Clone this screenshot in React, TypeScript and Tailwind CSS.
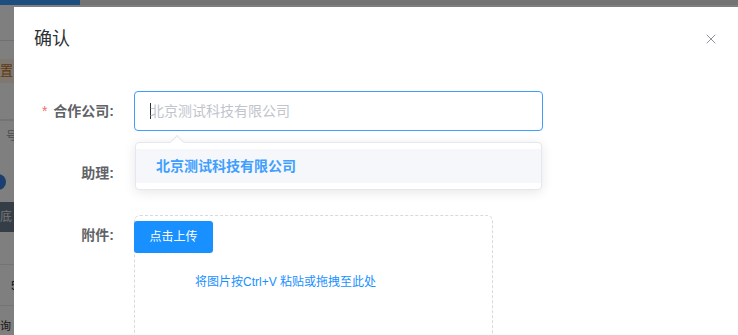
import { X } from "lucide-react";

const FONT = "font-['Liberation_Sans','Noto_Sans_CJK_SC',sans-serif]";

function BackgroundPage() {
  // the page behind the dialog, only a thin strip of it is visible
  return (
    <div className="flex h-full w-full flex-col bg-white">
      <div className="flex h-[5px]">
        <div className="w-[80px] bg-[#3a9cff]" />
        <div className="flex-1 bg-[#e8e8e8]" />
      </div>
      <div className="h-[36px] border-b border-[#e0e0e0]" />
      <div className="mt-[18px] flex h-[24px] items-center bg-[#fdf0e0] text-[13px] text-[#c07020]">
        <span>置</span>
      </div>
      <div className="h-[38px] border-b border-[#e8e8e8]" />
      <div className="flex h-[32px] items-center border-t border-[#e8e8e8] pl-[6px] text-[11px] text-[#999]">
        号
      </div>
      <div className="mt-[20px] flex h-[20px] items-center">
        <div className="-ml-[10px] h-[16px] w-[16px] rounded-full bg-[#3a7fe0]" />
      </div>
      <div className="mt-[10px] flex h-[30px] items-center bg-[#6b7a8f] text-[12px] text-[#e8e8e8]">
        <span>底</span>
      </div>
      <div className="h-[34px] border-b border-[#e8e8e8]" />
      <div className="flex h-[40px] items-center pl-[11px] text-[13px] text-[#333]">5</div>
      <div className="flex h-[30px] items-end border-t border-[#e8e8e8] text-[11px] text-[#333]">询</div>
    </div>
  );
}

function FormLabel({ text, required }: { text: string; required?: boolean }) {
  return (
    <div className="flex h-[40px] w-[100px] shrink-0 items-center justify-end pr-[20px] text-[14px] font-bold text-[#606266]">
      {required ? <span className="mr-[6px] font-normal text-[#f56c6c]">*</span> : null}
      {text}
    </div>
  );
}

export default function App() {
  return (
    <div className={`relative h-[335px] w-[738px] overflow-hidden ${FONT}`}>
      <BackgroundPage />
      <div className="absolute inset-0 bg-black/50" />

      <div className="absolute left-[14px] top-[7px] h-[400px] w-[760px] bg-white">
        <div className="flex items-center justify-between px-[20px] pt-[20px] pb-[10px]">
          <div className="text-[18px] leading-[24px] text-[#303133]">确认</div>
          <X className="mr-[35px] h-[16px] w-[16px] text-[#909399]" strokeWidth={1.5} />
        </div>

        <div className="px-[20px] pt-[30px]">
          {/* 合作公司 */}
          <div className="relative mb-[22px] flex">
            <FormLabel text="合作公司:" required />
            <div className="relative h-[40px] w-[409px] rounded-[4px] border border-[#409eff] bg-white">
              <div className="flex h-full items-center pl-[15px] text-[14px] text-[#c0c4cc]">
                <span className="mr-[-1px] h-[16px] w-[1px] bg-[#303133]" />
                北京测试科技有限公司
              </div>
              {/* suggestion popper */}
              <div className="absolute left-0 top-[50px] z-10 w-[407px] rounded-[4px] border border-[#e4e7ed] bg-white py-[6px] shadow-[0_2px_12px_rgba(0,0,0,0.1)]">
                <div className="absolute -top-[6px] left-[36px] h-[10px] w-[10px] rotate-45 border-l border-t border-[#e4e7ed] bg-white" />
                <div className="relative flex h-[34px] items-center bg-[#f5f7fa] pl-[20px] text-[14px] font-bold text-[#409eff]">
                  北京测试科技有限公司
                </div>
              </div>
            </div>
          </div>

          {/* 助理 */}
          <div className="mb-[22px] flex">
            <FormLabel text="助理:" />
            <div className="h-[40px] w-[409px]" />
          </div>

          {/* 附件 */}
          <div className="flex">
            <FormLabel text="附件:" />
            <div className="h-[160px] w-[359px] rounded-[6px] border border-dashed border-[#d9d9d9]">
              <div className="-ml-[1px] mt-[5px] flex h-[32px] w-[79px] items-center justify-center rounded-[3px] bg-[#1890ff] text-[12px] text-white">
                点击上传
              </div>
              <div className="mt-[20px] pl-[60px] text-[12px] text-[#1890ff]">将图片按Ctrl+V 粘贴或拖拽至此处</div>
            </div>
          </div>
        </div>
      </div>
    </div>
  );
}
